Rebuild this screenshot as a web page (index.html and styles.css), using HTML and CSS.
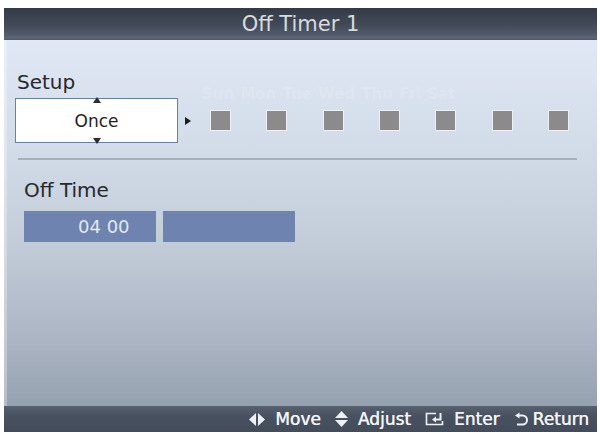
FILE: index.html
```html
<!DOCTYPE html>
<html lang="en">
<head>
    <meta charset="UTF-8">
    <title>Off Timer 1</title>
    <link rel="stylesheet" href="styles.css">
</head>
<body>
    <div class="screen">
        <header class="title-bar">Off Timer 1</header>

        <main class="content">
            <section class="setup">
                <h2 class="label setup-label">Setup</h2>
                <div class="setup-row">
                    <div class="spinner">
                        <span class="spin-up"></span>
                        Once
                        <span class="spin-down"></span>
                    </div>
                    <span class="pointer"></span>
                    <div class="days">
                        <div class="day-names">Sun Mon Tue Wed Thu Fri Sat</div>
                        <div class="day-boxes">
                            <span class="day-box"></span>
                            <span class="day-box"></span>
                            <span class="day-box"></span>
                            <span class="day-box"></span>
                            <span class="day-box"></span>
                            <span class="day-box"></span>
                            <span class="day-box"></span>
                        </div>
                    </div>
                </div>
            </section>

            <hr class="divider">

            <section class="off-time">
                <h2 class="label">Off Time</h2>
                <div class="time-row">
                    <div class="time-field">04 00</div>
                    <div class="time-field"></div>
                </div>
            </section>
        </main>

        <footer class="help-bar">
            <span class="help-item">
                <svg width="16" height="13" viewBox="0 0 16 13"><path d="M7 0 L0 6.5 L7 13 Z M9 0 L16 6.5 L9 13 Z" fill="#eef0f4"/></svg>
                Move
            </span>
            <span class="help-item">
                <svg width="13" height="16" viewBox="0 0 13 16"><path d="M6.5 0 L13 7 H0 Z M0 9 H13 L6.5 16 Z" fill="#eef0f4"/></svg>
                Adjust
            </span>
            <span class="help-item">
                <svg width="19" height="14" viewBox="0 0 19 14"><path d="M11 1.5 H1.5 V12.5 H17.5 V9" fill="none" stroke="#eef0f4" stroke-width="1.6"/><path d="M15.5 1 V7.5 H10" fill="none" stroke="#eef0f4" stroke-width="2"/><path d="M7 7.5 L11 4.5 V10.5 Z" fill="#eef0f4"/></svg>
                Enter
            </span>
            <span class="help-item return-item">
                <svg width="14" height="14" viewBox="0 0 14 14"><path d="M5 3.5 H8.5 A4.5 4.5 0 0 1 8.5 12.5 H3" fill="none" stroke="#eef0f4" stroke-width="2"/><path d="M1 3.5 L5.5 0.5 V6.5 Z" fill="#eef0f4"/></svg>
                Return
            </span>
        </footer>
    </div>
</body>
</html>
```

FILE: styles.css
```css
body {
    margin: 0;
    background-color: #fff;
    font-family: "DejaVu Sans", sans-serif;
}

.screen {
    margin: 8px 3px 2px 4px;
    width: 593px;
    height: 424px;
    display: flex;
    flex-direction: column;
}

.title-bar {
    height: 32px;
    display: flex;
    align-items: center;
    justify-content: center;
    font-size: 21px;
    color: #d9dadc;
    background: linear-gradient(#343b47 0%, #414957 50%, #4f5868 80%, #5d6778 94%, #4c5564 100%);
}

.content {
    flex: 1;
    padding: 30px 20px 0 11px;
    box-shadow: inset 3px 0 0 rgba(255, 255, 255, 0.3);
    background: linear-gradient(#dfe8f4 0%, #d2dbe8 30%, #c3ccd9 55%, #adb7c5 80%, #96a1af 100%);
}

.label {
    margin: 0;
    font-size: 20px;
    font-weight: normal;
    line-height: 24px;
    color: #26282c;
}

.setup-label {
    margin-left: 2px;
}

.setup-row {
    display: flex;
    align-items: flex-end;
    margin-top: 4px;
}

.spinner {
    position: relative;
    width: 161px;
    height: 43px;
    border: 1px solid #6a7eac;
    background-color: #fff;
    display: flex;
    align-items: center;
    justify-content: center;
    font-size: 17px;
    color: #1e1f22;
}

.spin-up,
.spin-down {
    position: absolute;
    left: 77px;
    width: 0;
    height: 0;
    border-left: 4px solid transparent;
    border-right: 4px solid transparent;
}

.spin-up {
    top: -2px;
    border-bottom: 6px solid #2a2c30;
}

.spin-down {
    bottom: -2px;
    border-top: 6px solid #2a2c30;
}

.pointer {
    align-self: center;
    margin: 0 11px 0 7px;
    width: 0;
    height: 0;
    border-top: 4px solid transparent;
    border-bottom: 4px solid transparent;
    border-left: 6px solid #1c1d20;
}

.days {
    display: flex;
    flex-direction: column;
    margin-bottom: 12px;
}

.day-names {
    margin-top: -12px;
    height: 16px;
    line-height: 16px;
    font-size: 15px;
    font-weight: bold;
    word-spacing: 1px;
    color: rgba(255, 255, 255, 0.16);
    white-space: nowrap;
}

.day-boxes {
    display: flex;
    justify-content: space-between;
    width: 359px;
    margin-top: 8px;
    padding-left: 8px;
}

.day-box {
    width: 19px;
    height: 19px;
    background-color: #8c8a8a;
    border: 1px solid #eef0f3;
}

.divider {
    margin: 15px 0 0 3px;
    height: 2px;
    border: none;
    background-color: #a5afbe;
}

.off-time {
    margin-top: 18px;
    padding-left: 9px;
}

.time-row {
    display: flex;
    gap: 7px;
    margin-top: 9px;
}

.time-field {
    width: 132px;
    height: 31px;
    box-sizing: border-box;
    padding-left: 54px;
    line-height: 31px;
    font-size: 18px;
    color: #e3e8f1;
    background-color: #6e83af;
}

.help-bar {
    height: 26px;
    display: flex;
    align-items: center;
    justify-content: flex-end;
    gap: 14px;
    padding-right: 8px;
    font-size: 17px;
    color: #f2f3f6;
    text-shadow: 0.4px 0 0 #f2f3f6;
    background: linear-gradient(#56606f, #485160 40%, #434c5a);
}

.help-item {
    display: flex;
    align-items: center;
    gap: 10px;
}

.return-item {
    gap: 5px;
}
```
